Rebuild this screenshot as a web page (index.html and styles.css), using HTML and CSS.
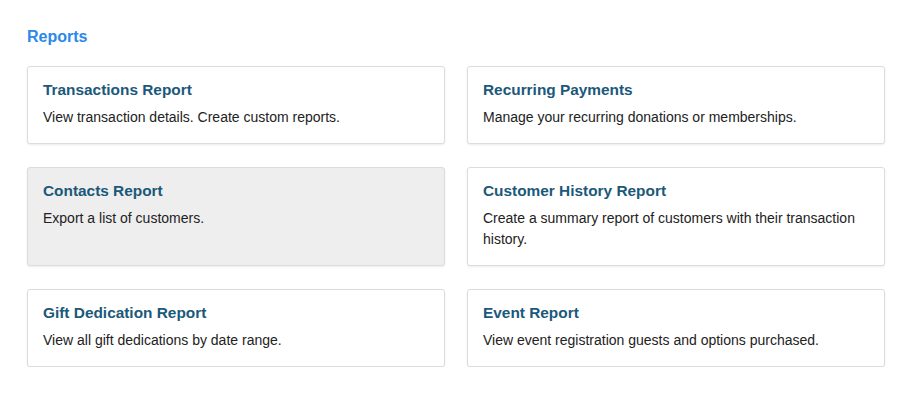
FILE: index.html
```html
<!DOCTYPE html>
<html lang="en">
<head>
<meta charset="UTF-8">
<meta name="viewport" content="width=device-width, initial-scale=1.0">
<title>Reports</title>
<link rel="stylesheet" href="styles.css">
</head>
<body>
<div class="reports">
    <h2>Reports</h2>
    <div class="report-grid">
        <a href="#" class="report-card">
            <h3>Transactions Report</h3>
            <p>View transaction details. Create custom reports.</p>
        </a>
        <a href="#" class="report-card">
            <h3>Recurring Payments</h3>
            <p>Manage your recurring donations or memberships.</p>
        </a>
        <a href="#" class="report-card active">
            <h3>Contacts Report</h3>
            <p>Export a list of customers.</p>
        </a>
        <a href="#" class="report-card">
            <h3>Customer History Report</h3>
            <p>Create a summary report of customers with their transaction history.</p>
        </a>
        <a href="#" class="report-card">
            <h3>Gift Dedication Report</h3>
            <p>View all gift dedications by date range.</p>
        </a>
        <a href="#" class="report-card">
            <h3>Event Report</h3>
            <p>View event registration guests and options purchased.</p>
        </a>
    </div>
</div>
</body>
</html>
```

FILE: styles.css
```css
body {
    font-family: 'Liberation Sans', Arial, sans-serif;
    margin: 0;
    padding: 0;
    background-color: #fff;
    color: #222;
}
.reports {
    padding: 28px 17px 0 27px;
}
h2 {
    font-size: 16px;
    font-weight: bold;
    color: #2c88e9;
    margin: 0 0 20px 0;
    line-height: 18px;
}
.report-grid {
    display: grid;
    grid-template-columns: 1fr 1fr;
    column-gap: 22px;
    row-gap: 23px;
}
.report-card {
    display: block;
    text-decoration: none;
    color: #222;
    background-color: #fff;
    border: 1px solid #dcdcdc;
    border-radius: 3px;
    box-shadow: 0 1px 2px rgba(0, 0, 0, 0.08);
    padding: 14px 15px 15px 15px;
}
.report-card.active {
    background-color: #eee;
}
.report-card h3 {
    font-size: 15.4px;
    font-weight: bold;
    color: #1b587a;
    margin: 0 0 9px 0;
    line-height: 17px;
}
.report-card p {
    font-size: 14px;
    line-height: 21px;
    margin: 0;
}
```
